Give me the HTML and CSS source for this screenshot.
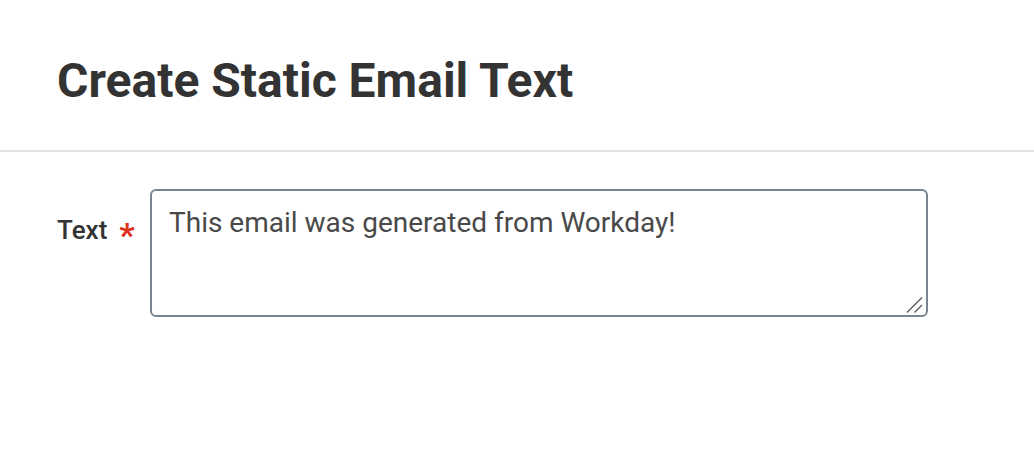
FILE: index.html
```html
<!DOCTYPE html>
<html>
<head>
<meta charset="utf-8">
<link rel="stylesheet" href="styles.css">
</head>
<body>
<header class="header">
  <h1 class="title">Create Static Email Text</h1>
</header>
<main class="form">
  <div class="field">
    <label class="label" for="txt">Text<span class="req">*</span></label>
    <div class="input-wrap">
      <textarea id="txt" class="input">This email was generated from Workday!</textarea>
      <svg class="grip" width="18" height="18" viewBox="0 0 18 18" aria-hidden="true">
        <line x1="1" y1="16.5" x2="16" y2="1.5" stroke="#555" stroke-width="1.3"/>
        <line x1="8.5" y1="16.5" x2="16" y2="9" stroke="#555" stroke-width="1.3"/>
      </svg>
    </div>
  </div>
</main>
</body>
</html>
```

FILE: styles.css
```css
html, body {
  margin: 0;
  padding: 0;
  background: #fff;
  font-family: Roboto, "Liberation Sans", sans-serif;
}
.header {
  height: 140px;
  padding-top: 10px;
  border-bottom: 2px solid #e2e2e4;
  box-sizing: content-box;
  padding-left: 57px;
  display: flex;
  align-items: center;
}
.title {
  margin: 0;
  font-size: 48px;
  font-weight: 700;
  color: #333333;
  letter-spacing: 0;
}
.form {
  padding: 37px 0 0 57px;
}
.field {
  display: flex;
  align-items: flex-start;
}
.label {
  width: 93px;
  padding-top: 26px;
  font-size: 26px;
  line-height: 30px;
  font-weight: 500;
  color: #333333;
  white-space: nowrap;
}
.req {
  color: #e0301e;
  font-size: 34px;
  font-weight: 700;
  line-height: 0;
  vertical-align: -8px;
  margin-left: 12px;
}
.input-wrap {
  position: relative;
  width: 778px;
  height: 128px;
}
.input {
  display: block;
  width: 100%;
  height: 100%;
  box-sizing: border-box;
  border: 2px solid #7b858f;
  border-radius: 6px;
  padding: 15px 17px;
  font-family: Roboto, "Liberation Sans", sans-serif;
  font-size: 28px;
  color: #494949;
  resize: none;
  outline: none;
}
.grip {
  position: absolute;
  right: 4px;
  bottom: 3px;
  pointer-events: none;
}
```
